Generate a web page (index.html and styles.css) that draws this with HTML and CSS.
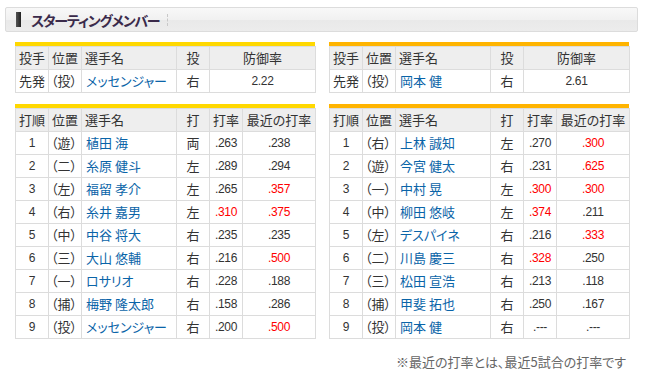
FILE: index.html
```html
<!DOCTYPE html>
<html lang="ja">
<head>
<meta charset="utf-8">
<title>スターティングメンバー</title>
<link rel="stylesheet" href="styles.css">
</head>
<body>
<div class="page">
  <div class="title">
    <span class="title-bar"></span>
    <h2 class="title-text">スターティングメンバー</h2>
    <span class="title-sep"></span>
  </div>
  <div class="grid">
    <div class="block block-home">
      <table class="tbl">
        <colgroup><col class="c-a"><col class="c-b"><col class="c-name"><col class="c-d"><col class="c-era"></colgroup>
        <tr class="head"><th class="l">投手</th><th class="l">位置</th><th class="l">選手名</th><th>投</th><th>防御率</th></tr>
        <tr><td class="l">先発</td><td class="l pos">（投）</td><td class="l name">メッセンジャー</td><td>右</td><td class="num">2.22</td></tr>
      </table>
    </div>
    <div class="block block-away">
      <table class="tbl">
        <colgroup><col class="c-a"><col class="c-b"><col class="c-name"><col class="c-d"><col class="c-era"></colgroup>
        <tr class="head"><th class="l">投手</th><th class="l">位置</th><th class="l">選手名</th><th>投</th><th>防御率</th></tr>
        <tr><td class="l">先発</td><td class="l pos">（投）</td><td class="l name">岡本 健</td><td>右</td><td class="num">2.61</td></tr>
      </table>
    </div>
    <div class="block block-home">
      <table class="tbl">
        <colgroup><col class="c-a"><col class="c-b"><col class="c-name"><col class="c-d"><col class="c-e"><col class="c-f"></colgroup>
        <tr class="head"><th class="l">打順</th><th class="l">位置</th><th class="l">選手名</th><th>打</th><th>打率</th><th>最近の打率</th></tr>
        <tr><td class="num">1</td><td class="l pos">（遊）</td><td class="l name">植田 海</td><td>両</td><td class="num">.263</td><td class="num">.238</td></tr>
        <tr><td class="num">2</td><td class="l pos">（二）</td><td class="l name">糸原 健斗</td><td>左</td><td class="num">.289</td><td class="num">.294</td></tr>
        <tr><td class="num">3</td><td class="l pos">（左）</td><td class="l name">福留 孝介</td><td>左</td><td class="num">.265</td><td class="num hot">.357</td></tr>
        <tr><td class="num">4</td><td class="l pos">（右）</td><td class="l name">糸井 嘉男</td><td>左</td><td class="num hot">.310</td><td class="num hot">.375</td></tr>
        <tr><td class="num">5</td><td class="l pos">（中）</td><td class="l name">中谷 将大</td><td>右</td><td class="num">.235</td><td class="num">.235</td></tr>
        <tr><td class="num">6</td><td class="l pos">（三）</td><td class="l name">大山 悠輔</td><td>右</td><td class="num">.216</td><td class="num hot">.500</td></tr>
        <tr><td class="num">7</td><td class="l pos">（一）</td><td class="l name">ロサリオ</td><td>右</td><td class="num">.228</td><td class="num">.188</td></tr>
        <tr><td class="num">8</td><td class="l pos">（捕）</td><td class="l name">梅野 隆太郎</td><td>右</td><td class="num">.158</td><td class="num">.286</td></tr>
        <tr><td class="num">9</td><td class="l pos">（投）</td><td class="l name">メッセンジャー</td><td>右</td><td class="num">.200</td><td class="num hot">.500</td></tr>
      </table>
    </div>
    <div class="block block-away">
      <table class="tbl">
        <colgroup><col class="c-a"><col class="c-b"><col class="c-name"><col class="c-d"><col class="c-e"><col class="c-f"></colgroup>
        <tr class="head"><th class="l">打順</th><th class="l">位置</th><th class="l">選手名</th><th>打</th><th>打率</th><th>最近の打率</th></tr>
        <tr><td class="num">1</td><td class="l pos">（右）</td><td class="l name">上林 誠知</td><td>左</td><td class="num">.270</td><td class="num hot">.300</td></tr>
        <tr><td class="num">2</td><td class="l pos">（遊）</td><td class="l name">今宮 健太</td><td>右</td><td class="num">.231</td><td class="num hot">.625</td></tr>
        <tr><td class="num">3</td><td class="l pos">（一）</td><td class="l name">中村 晃</td><td>左</td><td class="num hot">.300</td><td class="num hot">.300</td></tr>
        <tr><td class="num">4</td><td class="l pos">（中）</td><td class="l name">柳田 悠岐</td><td>左</td><td class="num hot">.374</td><td class="num">.211</td></tr>
        <tr><td class="num">5</td><td class="l pos">（左）</td><td class="l name">デスパイネ</td><td>右</td><td class="num">.216</td><td class="num hot">.333</td></tr>
        <tr><td class="num">6</td><td class="l pos">（二）</td><td class="l name">川島 慶三</td><td>右</td><td class="num hot">.328</td><td class="num">.250</td></tr>
        <tr><td class="num">7</td><td class="l pos">（三）</td><td class="l name">松田 宣浩</td><td>右</td><td class="num">.213</td><td class="num">.118</td></tr>
        <tr><td class="num">8</td><td class="l pos">（捕）</td><td class="l name">甲斐 拓也</td><td>右</td><td class="num">.250</td><td class="num">.167</td></tr>
        <tr><td class="num">9</td><td class="l pos">（投）</td><td class="l name">岡本 健</td><td>右</td><td class="num">.---</td><td class="num">.---</td></tr>
      </table>
    </div>
    <p class="note">※最近の打率とは、最近5試合の打率です</p>
  </div>
</div>
</body>
</html>
```
FILE: styles.css
```css
html, body {
  margin: 0;
  padding: 0;
  background: #fff;
}
body {
  font-family: "Noto Sans CJK JP", sans-serif;
  font-size: 13px;
  color: #333;
  font-feature-settings: "palt";
}
.page {
  padding: 7px 8px 0 5px;
}
.title {
  box-sizing: border-box;
  height: 25px;
  border: 1px solid #dcdcdc;
  border-radius: 2px;
  background: linear-gradient(#f8f8f8 0%, #f1f1f1 50%, #e9e9e9 52%, #ececec 100%);
  display: flex;
  align-items: center;
  padding-left: 10px;
}
.title-bar {
  width: 5px;
  height: 15px;
  background: linear-gradient(to right, #555, #222);
  margin-right: 10px;
}
.title-text {
  margin: 0;
  font-size: 14px;
  font-weight: bold;
  line-height: 1;
  letter-spacing: -1.2px;
  color: #3a2a4a;
}
.title-sep {
  width: 0;
  height: 12px;
  border-left: 1px dashed #c8c8c8;
  margin-left: 8px;
}
.grid {
  display: grid;
  grid-template-columns: 300px 300px;
  column-gap: 14px;
  row-gap: 11px;
  margin: 10px 0 0 10px;
}
.block-home {
  border-top: 4px solid #ffd800;
}
.block-away {
  border-top: 4px solid #ffb400;
}
.tbl {
  width: 300px;
  table-layout: fixed;
  border-collapse: collapse;
}
.tbl th, .tbl td {
  border: 1px solid #dcdcdc;
  height: 23px;
  padding: 0 3px;
  line-height: 16px;
  text-align: center;
  font-weight: normal;
  white-space: nowrap;
  overflow: hidden;
  box-sizing: border-box;
}
.tbl th {
  background: #eee;
}
.tbl .l {
  text-align: left;
}
.tbl .pos {
  padding-left: 2px;
}
.tbl .name {
  color: #0a64a8;
  padding-left: 4px;
}
.tbl .num {
  font-family: "Liberation Sans", "Noto Sans CJK JP", sans-serif;
  font-size: 12px;
  letter-spacing: -0.3px;
}
.tbl .hot {
  color: #f00;
}
.c-a, .c-b, .c-d, .c-e {
  width: 33px;
}
.c-name {
  width: 95px;
}
.c-era {
  width: 106px;
}
.c-f {
  width: 73px;
}
.note {
  grid-column: 2;
  margin: 4px 0 0;
  text-align: right;
  padding-right: 3px;
  color: #666;
  font-size: 13px;
  line-height: 16px;
}
```
